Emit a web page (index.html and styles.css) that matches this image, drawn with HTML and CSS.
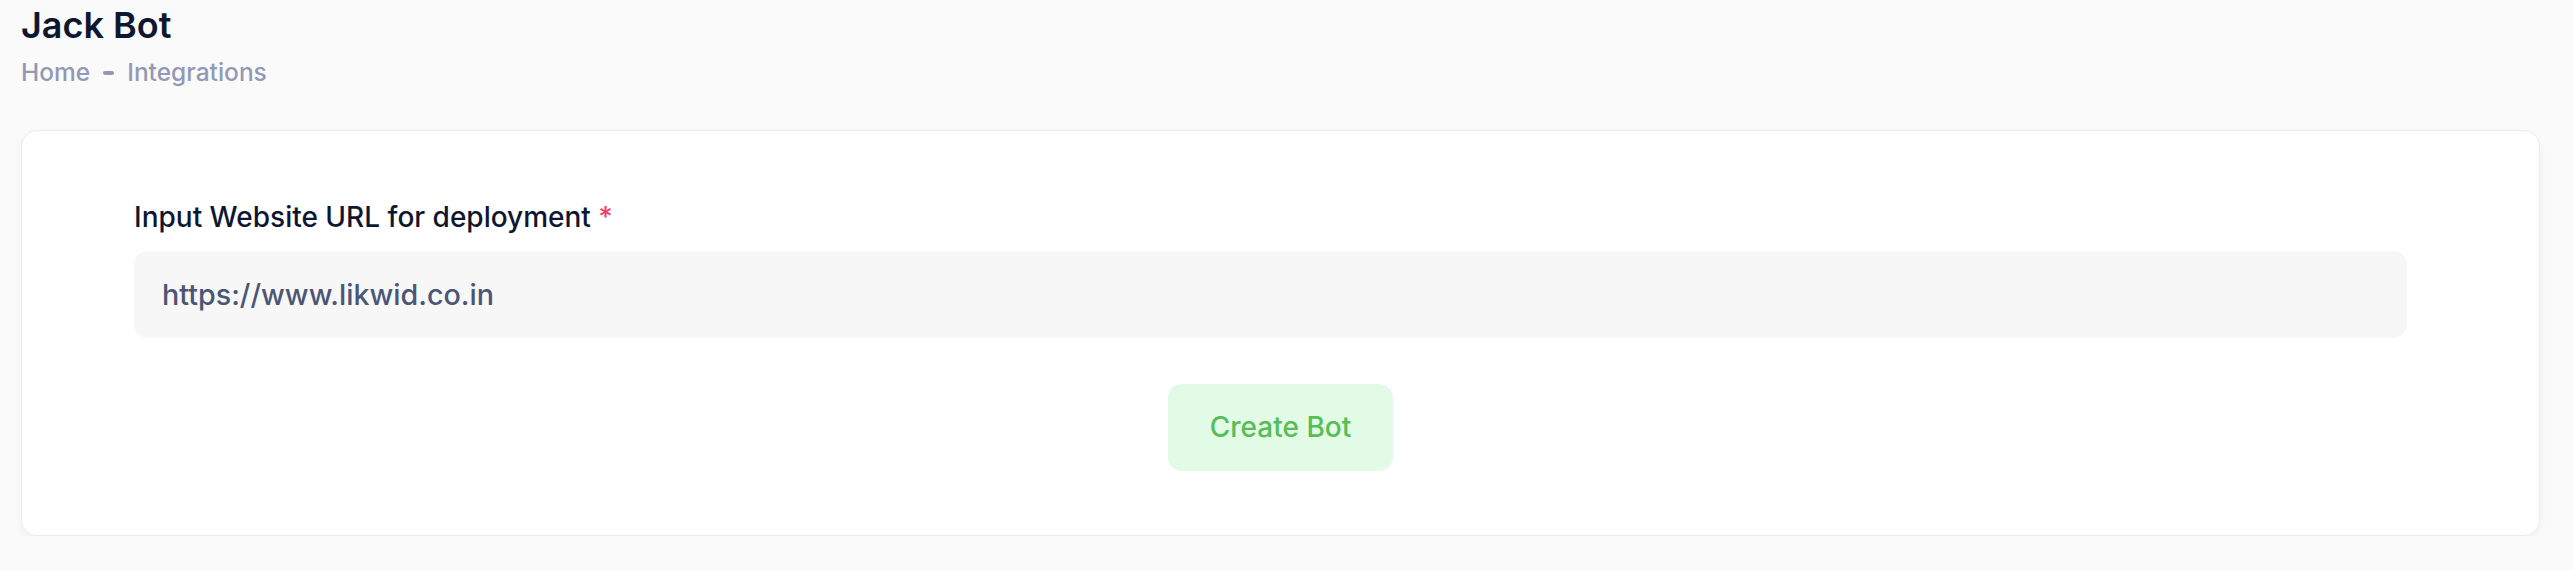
FILE: index.html
```html
<!DOCTYPE html>
<html lang="en">
<head>
    <meta charset="UTF-8">
    <meta name="viewport" content="width=device-width, initial-scale=1.0">
    <title>Jack Bot</title>
    <link rel="stylesheet" href="styles.css">
</head>
<body>
    <div class="page">
        <div class="page-header">
            <h1>Jack Bot</h1>
            <div class="breadcrumb">
                <a href="#">Home</a>
                <span class="sep"></span>
                <span>Integrations</span>
            </div>
        </div>

        <div class="card">
            <form id="deployForm">
                <label for="website_url">Input Website URL for deployment <span class="required">*</span></label>
                <input type="text" id="website_url" name="website_url" value="https://www.likwid.co.in" required>
                <div class="actions">
                    <button type="submit" class="create-button">Create Bot</button>
                </div>
            </form>
        </div>
    </div>
</body>
</html>
```

FILE: styles.css
```css
body {
    font-family: 'Inter', 'Noto Sans', sans-serif;
    background-color: #fafafa;
    margin: 0;
    padding: 0;
}
.page {
    padding: 4px 34px 0 21px;
}
h1 {
    margin: 0;
    font-size: 36px;
    line-height: 1.2;
    font-weight: 600;
    color: #0f1730;
}
.breadcrumb {
    display: flex;
    align-items: center;
    gap: 13px;
    margin-top: 7px;
    font-size: 24.5px;
    line-height: 1.5;
    font-weight: 500;
    color: #9399b5;
}
.breadcrumb a {
    color: #9399b5;
    text-decoration: none;
}
.breadcrumb .sep {
    width: 11px;
    height: 4px;
    border-radius: 2px;
    background-color: #9399b5;
}
.card {
    margin-top: 39px;
    background-color: #fff;
    border: 1px solid #ececec;
    border-radius: 16px;
    box-shadow: 0 4px 10px rgba(0, 0, 0, 0.04);
    padding: 65px 132px 64px 112px;
}
label {
    display: block;
    font-size: 28px;
    line-height: 1.5;
    font-weight: 500;
    color: #0f1730;
    margin-bottom: 13px;
}
.required {
    color: #f1416c;
}
input[type="text"] {
    display: block;
    width: 100%;
    height: 87px;
    padding: 0 28px;
    border: none;
    border-radius: 14px;
    background-color: #f7f7f7;
    font-family: inherit;
    font-size: 28.7px;
    font-weight: 500;
    color: #4b5675;
    box-sizing: border-box;
    outline: none;
}
.actions {
    display: flex;
    justify-content: center;
    margin-top: 46px;
    margin-right: -20px;
}
.create-button {
    height: 87px;
    padding: 0 42px;
    border: none;
    border-radius: 14px;
    background-color: #e1fbe6;
    color: #57bd57;
    font-family: inherit;
    font-size: 28px;
    font-weight: 500;
    cursor: pointer;
}
```
